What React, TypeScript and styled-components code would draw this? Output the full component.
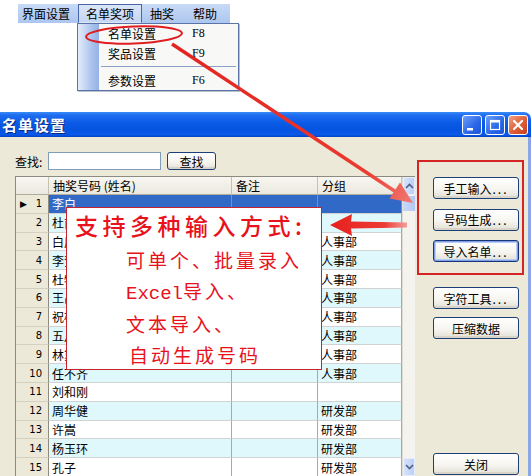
import React from "react";
import styled, { createGlobalStyle, css } from "styled-components";

const CJK = `"Noto Sans CJK SC", "Liberation Sans", sans-serif`;

const GlobalStyle = createGlobalStyle`
    html, body {
        margin: 0;
        padding: 0;
        background: #ffffff;
    }
    body {
        font-family: ${CJK};
        font-size: 12px;
        color: #000;
    }
`;

interface RowData {
    name: string;
    group: string;
}

const rows: RowData[] = [
    { name: "李白", group: "" },
    { name: "杜甫", group: "" },
    { name: "白居易", group: "人事部" },
    { name: "李贺", group: "人事部" },
    { name: "杜牧", group: "人事部" },
    { name: "王昌龄", group: "人事部" },
    { name: "祝枝山", group: "人事部" },
    { name: "五月天", group: "人事部" },
    { name: "林黛玉", group: "人事部" },
    { name: "任不齐", group: "人事部" },
    { name: "刘和刚", group: "" },
    { name: "周华健", group: "研发部" },
    { name: "许嵩", group: "研发部" },
    { name: "杨玉环", group: "研发部" },
    { name: "孔子", group: "研发部" },
];

const App = () => {
    return (
        <>
            <GlobalStyle />
            <Page>
                <TopArea>
                    <MenuBar>
                        <MenuItem $first>界面设置</MenuItem>
                        <MenuItem $open>名单奖项</MenuItem>
                        <MenuItem>抽奖</MenuItem>
                        <MenuItem $last>帮助</MenuItem>
                    </MenuBar>
                    <Dropdown>
                        <DropStrip />
                        <DropList>
                            <DropItem>
                                <DropLabel>名单设置</DropLabel>
                                <Shortcut>F8</Shortcut>
                            </DropItem>
                            <DropItem>
                                <DropLabel>奖品设置</DropLabel>
                                <Shortcut>F9</Shortcut>
                            </DropItem>
                            <DropSeparator />
                            <DropItem>
                                <DropLabel>参数设置</DropLabel>
                                <Shortcut>F6</Shortcut>
                            </DropItem>
                        </DropList>
                    </Dropdown>
                </TopArea>

                <Window>
                    <TitleBar>
                        <Title>名单设置</Title>
                        <TitleButtons>
                            <CaptionButton>
                                <svg width="18" height="18" viewBox="0 0 18 18">
                                    <rect x="4" y="12" width="6" height="2.5" fill="#fff" />
                                </svg>
                            </CaptionButton>
                            <CaptionButton>
                                <svg width="18" height="18" viewBox="0 0 18 18">
                                    <rect x="4.5" y="4.5" width="9" height="9" fill="none" stroke="#fff" strokeWidth="1.2" />
                                    <rect x="4" y="4" width="10" height="2.5" fill="#fff" />
                                </svg>
                            </CaptionButton>
                            <CaptionButton $close>
                                <svg width="18" height="18" viewBox="0 0 18 18">
                                    <path d="M5 5 L13 13 M13 5 L5 13" stroke="#fff" strokeWidth="2.2" strokeLinecap="round" />
                                </svg>
                            </CaptionButton>
                        </TitleButtons>
                    </TitleBar>

                    <Body>
                        <LeftPane>
                            <SearchRow>
                                <SearchLabel>查找:</SearchLabel>
                                <SearchInput />
                                <SmallButton>查找</SmallButton>
                            </SearchRow>
                            <GridBox>
                                <Table>
                                    <HeadCell />
                                    <HeadCell>抽奖号码 (姓名)</HeadCell>
                                    <HeadCell>备注</HeadCell>
                                    <HeadCell>分组</HeadCell>
                                    {rows.map((r, i) => (
                                        <React.Fragment key={i}>
                                            <RowHead>
                                                {i === 0 && <Pointer>▶</Pointer>}
                                                {i + 1}
                                            </RowHead>
                                            <Cell $alt={i % 2 === 1} $selected={i === 0}>
                                                {r.name}
                                            </Cell>
                                            <Cell $alt={i % 2 === 1} $selected={i === 0} />
                                            <Cell $alt={i % 2 === 1} $selected={i === 0}>
                                                {r.group}
                                            </Cell>
                                        </React.Fragment>
                                    ))}
                                </Table>
                                <ScrollBar>
                                    <ScrollArrow>
                                        <svg width="9" height="6" viewBox="0 0 9 6">
                                            <path d="M1 5 L4.5 1.5 L8 5" fill="none" stroke="#4d6185" strokeWidth="1.6" />
                                        </svg>
                                    </ScrollArrow>
                                    <ScrollThumb />
                                    <ScrollTrack />
                                    <ScrollArrow>
                                        <svg width="9" height="6" viewBox="0 0 9 6">
                                            <path d="M1 1 L4.5 4.5 L8 1" fill="none" stroke="#4d6185" strokeWidth="1.6" />
                                        </svg>
                                    </ScrollArrow>
                                </ScrollBar>
                            </GridBox>
                        </LeftPane>

                        <RightPane>
                            <HighlightBox>
                                <XpButton>
                                    手工输入<Dots>...</Dots>
                                </XpButton>
                                <XpButton>
                                    号码生成<Dots>...</Dots>
                                </XpButton>
                                <XpButton $focused>
                                    导入名单<Dots>...</Dots>
                                </XpButton>
                            </HighlightBox>
                            <ButtonStack>
                                <XpButton>
                                    字符工具<Dots>...</Dots>
                                </XpButton>
                                <XpButton>压缩数据</XpButton>
                            </ButtonStack>
                            <CloseRow>
                                <XpButton>关闭</XpButton>
                            </CloseRow>
                        </RightPane>
                    </Body>
                </Window>

                <Callout>
                    <CalloutTitle>支持多种输入方式:</CalloutTitle>
                    <CalloutLine $first>可单个、批量录入</CalloutLine>
                    <CalloutLine>
                        <Latin>Excel</Latin>导入、
                    </CalloutLine>
                    <CalloutLine>文本导入、</CalloutLine>
                    <CalloutLine $shift>自动生成号码</CalloutLine>
                </Callout>

                <Annotations width="531" height="476" viewBox="0 0 531 476">
                    <defs>
                        <linearGradient id="arrowA" x1="172" y1="44" x2="413" y2="203" gradientUnits="userSpaceOnUse">
                            <stop offset="0" stopColor="#e2231f" />
                            <stop offset="0.8" stopColor="#ea3a30" />
                            <stop offset="1" stopColor="#f07a72" />
                        </linearGradient>
                        <linearGradient id="arrowB" x1="330" y1="0" x2="408" y2="0" gradientUnits="userSpaceOnUse">
                            <stop offset="0" stopColor="#e8201c" />
                            <stop offset="0.7" stopColor="#ec3b35" />
                            <stop offset="1" stopColor="#f5a3a0" />
                        </linearGradient>
                    </defs>
                    <ellipse
                        cx="134"
                        cy="35"
                        rx="48"
                        ry="8.5"
                        fill="none"
                        stroke="#e01e22"
                        strokeWidth="2"
                        transform="rotate(-2 134 35)"
                    />
                    <line x1="172" y1="44" x2="396" y2="192" stroke="url(#arrowA)" strokeWidth="3.5" />
                    <polygon points="413,203 389.5,198.5 400,182.5" fill="url(#arrowA)" />
                    <polygon
                        points="330,225 352,214 351,221.5 407,222.5 407,227.5 351,228.5 352,236"
                        fill="url(#arrowB)"
                    />
                </Annotations>
            </Page>
        </>
    );
};

const Page = styled.div`
    position: relative;
    width: 531px;
    height: 476px;
    overflow: hidden;
    display: flex;
    flex-direction: column;
    background: #ffffff;
`;

const TopArea = styled.div`
    position: relative;
    flex: none;
    height: 112px;
    padding: 4px 0 0 18px;
    box-sizing: border-box;
`;

const MenuBar = styled.div`
    display: inline-flex;
    height: 19px;
    padding-right: 2px;
    background: linear-gradient(#c8daf6, #adc6ef);
`;

const MenuItem = styled.div<{ $first?: boolean; $open?: boolean; $last?: boolean }>`
    display: flex;
    align-items: center;
    padding: 0 7px;
    font-size: 12px;
    line-height: 19px;
    color: #000;
    box-sizing: border-box;
    border: 1px solid transparent;
    ${(p) =>
        p.$first &&
        css`
            padding-left: 3px;
        `}
    ${(p) =>
        p.$last &&
        css`
            padding: 0 10px;
        `}
    ${(p) =>
        p.$open &&
        css`
            border-color: #4a66a8;
            border-bottom-color: transparent;
            background: linear-gradient(#dbe6f8, #c4d6f3);
        `}
`;

const Dropdown = styled.div`
    position: absolute;
    left: 77px;
    top: 23px;
    width: 162px;
    height: 68px;
    display: flex;
    box-sizing: border-box;
    border: 1px solid #5a74a8;
    background: #f8f8f6;
    box-shadow: 1px 1px 0 #b8c0d0;
`;

const DropStrip = styled.div`
    width: 21px;
    background: linear-gradient(to right, #e4ecfa, #a7c0ec 70%, #94b2e6);
`;

const DropList = styled.div`
    flex: 1;
    display: flex;
    flex-direction: column;
`;

const DropItem = styled.div`
    display: flex;
    align-items: center;
    height: 20px;
    padding-left: 9px;
`;

const DropLabel = styled.span`
    width: 84px;
    font-size: 12px;
`;

const Shortcut = styled.span`
    font-family: "Liberation Serif", serif;
    font-size: 12px;
`;

const DropSeparator = styled.div`
    height: 1px;
    margin: 3px 2px 4px 2px;
    background: #8ca0c8;
`;

const Window = styled.div`
    flex: 1;
    display: flex;
    flex-direction: column;
    min-height: 0;
`;

const TitleBar = styled.div`
    flex: none;
    height: 25px;
    display: flex;
    align-items: center;
    justify-content: space-between;
    padding: 0 3px 0 2px;
    border-radius: 0 7px 0 0;
    background: linear-gradient(#3a8cf8 0%, #1f6ef0 12%, #0a5ae6 45%, #0554e0 70%, #0a58e8 90%, #0344c8 100%);
`;

const Title = styled.div`
    font-size: 15px;
    font-weight: bold;
    letter-spacing: 1px;
    color: #ffffff;
    text-shadow: 1px 1px 0 #0a2a80;
`;

const TitleButtons = styled.div`
    display: flex;
    gap: 3px;
`;

const CaptionButton = styled.div<{ $close?: boolean }>`
    width: 20px;
    height: 20px;
    box-sizing: border-box;
    display: flex;
    align-items: center;
    justify-content: center;
    border: 1px solid #ffffff;
    border-radius: 3px;
    background: linear-gradient(135deg, #6c9ff8, #2a66e8 60%, #1f55d8);
    ${(p) =>
        p.$close &&
        css`
            background: linear-gradient(135deg, #f0a088, #e0623a 50%, #c8401c);
        `}
`;

const Body = styled.div`
    flex: 1;
    min-height: 0;
    display: flex;
    background: #ece9d8;
    border-right: 3px solid #8aa6e4;
`;

const LeftPane = styled.div`
    display: flex;
    flex-direction: column;
    padding: 15px 0 0 15px;
    width: 400px;
`;

const SearchRow = styled.div`
    display: flex;
    align-items: center;
    height: 18px;
`;

const SearchLabel = styled.span`
    width: 33px;
    font-size: 12px;
`;

const SearchInput = styled.div`
    width: 113px;
    height: 18px;
    box-sizing: border-box;
    background: #ffffff;
    border: 1px solid #7f9db9;
`;

const XpButton = styled.div<{ $focused?: boolean }>`
    width: 86px;
    height: 22px;
    box-sizing: border-box;
    display: flex;
    align-items: center;
    justify-content: center;
    font-size: 12px;
    color: #000;
    border: 1px solid #1c3f78;
    border-radius: 3px;
    background: linear-gradient(#ffffff, #f6f5f0 55%, #e2e0d6);
    box-shadow: inset 0 -2px 0 #d8d4c8;
    ${(p) =>
        p.$focused &&
        css`
            border-color: #18357a;
            box-shadow: inset 0 0 0 1px #7ea0e4, inset 0 0 0 2px #b8ccf4;
        `}
`;

const SmallButton = styled(XpButton)`
    width: 49px;
    height: 18px;
    margin-left: 6px;
`;

const Dots = styled.span`
    letter-spacing: 2px;
    margin-left: 1px;
`;

const GridBox = styled.div`
    flex: 1;
    min-height: 0;
    margin-top: 6px;
    display: flex;
    overflow: hidden;
    border-left: 1px solid #8d8b80;
    border-top: 1px solid #8d8b80;
    background: #ffffff;
`;

const Table = styled.div`
    display: grid;
    grid-template-columns: 33px 183px 86px 84px;
    grid-template-rows: 18px;
    grid-auto-rows: 18.8px;
    align-content: start;
`;

const HeadCell = styled.div`
    box-sizing: border-box;
    padding-left: 4px;
    display: flex;
    align-items: center;
    font-size: 12px;
    background: linear-gradient(#f7f6f0, #ebe9df);
    border-right: 1px solid #c4c1b2;
    border-bottom: 1px solid #b0ad9e;
`;

const RowHead = styled.div`
    position: relative;
    box-sizing: border-box;
    display: flex;
    align-items: center;
    justify-content: flex-end;
    padding-right: 6px;
    font-family: "DejaVu Sans", sans-serif;
    font-size: 10px;
    background: #ece9d8;
    border-right: 1px solid #8d8b80;
    border-bottom: 1px solid #d4d0c2;
`;

const Pointer = styled.span`
    position: absolute;
    left: 4px;
    font-size: 9px;
`;

const Cell = styled.div<{ $alt?: boolean; $selected?: boolean }>`
    box-sizing: border-box;
    display: flex;
    align-items: center;
    padding-left: 3px;
    font-size: 12px;
    white-space: nowrap;
    overflow: hidden;
    background: ${(p) => (p.$alt ? "#def8fb" : "#ffffff")};
    border-right: 1px solid #a8a8a4;
    border-bottom: 1px solid #d2d2d2;
    ${(p) =>
        p.$selected &&
        css`
            background: #3169c6;
            color: #ffffff;
            border-right-color: #6a90d8;
        `}
`;

const ScrollBar = styled.div`
    width: 13px;
    display: flex;
    flex-direction: column;
    background: #f4f3ee;
    border-left: 1px solid #e0ded4;
`;

const ScrollArrow = styled.div`
    height: 18px;
    flex: none;
    display: flex;
    align-items: center;
    justify-content: center;
    background: linear-gradient(to right, #d6e2fb, #bccff7);
    border: 1px solid #e8eefb;
    box-sizing: border-box;
`;

const ScrollThumb = styled.div`
    height: 15px;
    flex: none;
    margin-top: 1px;
    background: linear-gradient(to right, #c8d8fa, #b2c8f4);
`;

const ScrollTrack = styled.div`
    flex: 1;
`;

const RightPane = styled.div`
    flex: 1;
    display: flex;
    flex-direction: column;
    padding: 23px 0 0 2px;
`;

const HighlightBox = styled.div`
    width: 107px;
    height: 115px;
    box-sizing: border-box;
    border: 2px solid #d42424;
    padding: 15px 0 0 14px;
    display: flex;
    flex-direction: column;
    gap: 9.5px;
`;

const ButtonStack = styled.div`
    display: flex;
    flex-direction: column;
    gap: 8px;
    margin-top: 12px;
    padding-left: 16px;
`;

const CloseRow = styled.div`
    margin-top: auto;
    padding: 0 0 1px 16px;
`;

const Callout = styled.div`
    position: absolute;
    left: 66px;
    top: 207px;
    width: 256px;
    height: 163px;
    box-sizing: border-box;
    background: #ffffff;
    border: 1px solid #c42430;
    padding: 3px 0 0 8px;
    color: #e8121c;
    font-family: ${CJK};
    font-weight: normal;
`;

const CalloutTitle = styled.div`
    font-size: 23px;
    line-height: 28px;
    letter-spacing: 4.5px;
    font-weight: 500;
`;

const CalloutLine = styled.div<{ $first?: boolean; $shift?: boolean }>`
    padding-left: ${(p) => (p.$shift ? 54 : 51)}px;
    font-size: 19px;
    line-height: 30.5px;
    letter-spacing: 3px;
    margin-top: ${(p) => (p.$first ? 6 : 0)}px;
`;

const Latin = styled.span`
    font-family: "Liberation Mono", monospace;
    font-size: 19px;
    letter-spacing: 0;
`;

const Annotations = styled.svg`
    position: absolute;
    left: 0;
    top: 0;
    pointer-events: none;
`;

export default App;
